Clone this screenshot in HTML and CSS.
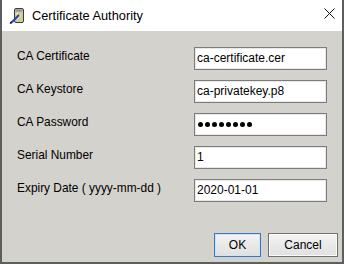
FILE: index.html
```html
<!DOCTYPE html>
<html lang="en">
<head>
    <meta charset="UTF-8">
    <meta name="viewport" content="width=device-width, initial-scale=1.0">
    <title>Certificate Authority</title>
    <link rel="stylesheet" href="styles.css">
</head>
<body>
    <div class="window">
        <div class="title-bar">
            <svg class="app-icon" width="16" height="17" viewBox="0 0 16 17">
                <rect x="5.5" y="1.5" width="9" height="14" rx="1.5" fill="#cfcaa8" stroke="#3a3a3a"/>
                <rect x="6.5" y="2.5" width="7" height="2" fill="#8d8d8d"/>
                <rect x="7" y="6" width="2" height="2" fill="#f2e860"/>
                <rect x="10" y="8" width="2" height="2" fill="#f2e860"/>
                <rect x="8" y="10" width="2" height="2" fill="#f2e860"/>
                <line x1="2" y1="16" x2="10" y2="8" stroke="#1c3fd0" stroke-width="2"/>
                <line x1="1" y1="16.5" x2="2.5" y2="15" stroke="#111" stroke-width="1.5"/>
            </svg>
            <span class="title">Certificate Authority</span>
            <svg class="close-icon" width="11" height="11" viewBox="0 0 11 11">
                <path d="M0.5 0.5 L10.5 10.5 M10.5 0.5 L0.5 10.5" stroke="#111" stroke-width="1"/>
            </svg>
        </div>

        <div class="content">
            <div class="form">
                <label class="label">CA Certificate</label>
                <div class="field">ca-certificate.cer</div>

                <label class="label">CA Keystore</label>
                <div class="field">ca-privatekey.p8</div>

                <label class="label">CA Password</label>
                <div class="field password">
                    <i></i><i></i><i></i><i></i><i></i><i></i><i></i><i></i>
                </div>

                <label class="label">Serial Number</label>
                <div class="field">1</div>

                <label class="label">Expiry Date ( yyyy-mm-dd )</label>
                <div class="field">2020-01-01</div>
            </div>

            <div class="buttons">
                <button class="btn ok-btn">OK</button>
                <button class="btn">Cancel</button>
            </div>
        </div>
    </div>
</body>
</html>
```

FILE: styles.css
```css
body {
    margin: 0;
    font-family: 'Liberation Sans', Arial, sans-serif;
    color: #000;
    background: #fff;
}

.window {
    width: 344px;
    height: 264px;
    box-sizing: border-box;
    display: flex;
    flex-direction: column;
    border: 2px solid #5e5e5e;
    border-top: none;
}

.title-bar {
    height: 31px;
    flex-shrink: 0;
    display: flex;
    align-items: center;
    background: #fff;
    padding-left: 7px;
}

.app-icon {
    margin-top: -1px;
}

.title {
    font-size: 12.8px;
    margin-left: 7px;
    margin-top: -1px;
}

.close-icon {
    margin-left: auto;
    margin-right: 7px;
    margin-top: -4px;
}

.content {
    flex: 1;
    display: flex;
    flex-direction: column;
    background: #d4d2cc;
    padding: 16px 4px 5px 15px;
}

.form {
    display: grid;
    grid-template-columns: 177px 133px;
    grid-auto-rows: 23px;
    row-gap: 10px;
    align-items: center;
}

.label {
    font-size: 11.9px;
    padding-bottom: 6px;
}

.field {
    height: 23px;
    box-sizing: border-box;
    border: 1px solid #7c7c7c;
    box-shadow: inset 0 0 0 1px #e8e8e8;
    background: #fff;
    font-size: 12px;
    line-height: 21px;
    padding-left: 2px;
}

.password {
    display: flex;
    align-items: center;
    gap: 2px;
    padding-left: 3px;
}

.password i {
    width: 5px;
    height: 5px;
    border-radius: 50%;
    background: #000;
}

.buttons {
    margin-top: auto;
    display: flex;
    justify-content: flex-end;
    gap: 7px;
}

.btn {
    height: 24px;
    padding: 0;
    font-family: 'Liberation Sans', Arial, sans-serif;
    font-size: 12px;
    color: #000;
    border: 1px solid #707070;
    box-shadow: inset 0 0 0 1px #fbfbfb;
    background: linear-gradient(#f3f3f3, #e0e0e0);
    width: 70px;
}

.ok-btn {
    width: 47px;
    border-color: #3478c6;
    box-shadow: inset 0 0 0 1px #cfe2f7;
}
```
